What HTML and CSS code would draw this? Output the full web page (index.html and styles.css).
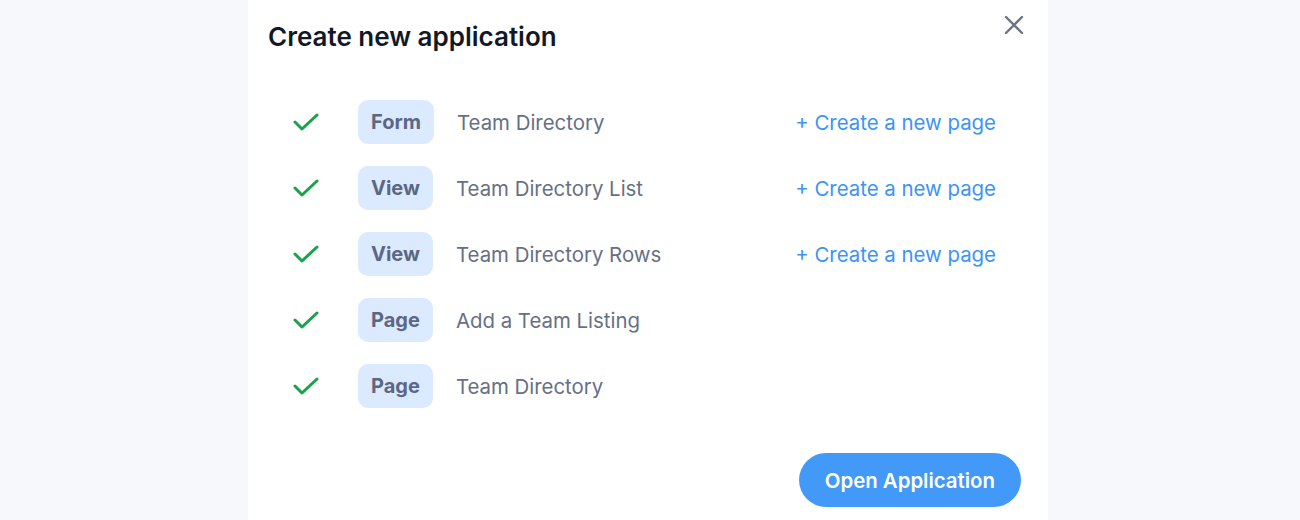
FILE: index.html
```html
<!DOCTYPE html>
<html lang="en">

<head>
    <meta charset="UTF-8">
    <meta name="viewport" content="width=device-width, initial-scale=1.0">
    <title>Create new application</title>
    <link rel="stylesheet" href="styles.css">
</head>

<body>
    <div class="modal">
        <!-- header -->
        <div class="modal_header">
            <h1>Create new application</h1>
            <button class="close_btn" aria-label="Close">
                <svg width="20" height="20" viewBox="0 0 20 20">
                    <path d="M2 2 L18 18 M18 2 L2 18" stroke="#6b7385" stroke-width="2.4" stroke-linecap="round" fill="none" />
                </svg>
            </button>
        </div>

        <!-- created items -->
        <div class="steps">
            <div class="step">
                <span class="check"><svg width="26" height="18" viewBox="0 0 26 18"><path d="M2 9 L9 16 L24 2" /></svg></span>
                <span class="badge">Form</span>
                <span class="name">Team Directory</span>
                <a class="new_page" href="#">+ Create a new page</a>
            </div>
            <div class="step">
                <span class="check"><svg width="26" height="18" viewBox="0 0 26 18"><path d="M2 9 L9 16 L24 2" /></svg></span>
                <span class="badge">View</span>
                <span class="name">Team Directory List</span>
                <a class="new_page" href="#">+ Create a new page</a>
            </div>
            <div class="step">
                <span class="check"><svg width="26" height="18" viewBox="0 0 26 18"><path d="M2 9 L9 16 L24 2" /></svg></span>
                <span class="badge">View</span>
                <span class="name">Team Directory Rows</span>
                <a class="new_page" href="#">+ Create a new page</a>
            </div>
            <div class="step">
                <span class="check"><svg width="26" height="18" viewBox="0 0 26 18"><path d="M2 9 L9 16 L24 2" /></svg></span>
                <span class="badge">Page</span>
                <span class="name">Add a Team Listing</span>
                <span></span>
            </div>
            <div class="step">
                <span class="check"><svg width="26" height="18" viewBox="0 0 26 18"><path d="M2 9 L9 16 L24 2" /></svg></span>
                <span class="badge">Page</span>
                <span class="name">Team Directory</span>
                <span></span>
            </div>
        </div>

        <div class="modal_footer">
            <button class="open_btn">Open Application</button>
        </div>
    </div>
</body>

</html>
```

FILE: styles.css
```css
body {
    margin: 0;
    padding: 0 4px 0 0;
    background-color: #f7f8fc;
    font-family: Inter, "Noto Sans", sans-serif;
    display: flex;
    justify-content: center;
}

.modal {
    background-color: #ffffff;
    width: 800px;
    height: 520px;
    box-sizing: border-box;
    padding: 12px 27px 0 20px;
}

.modal_header {
    display: flex;
    justify-content: space-between;
    align-items: flex-start;
}

h1 {
    margin: 9px 0 0 0;
    font-size: 26px;
    font-weight: 600;
    color: #111827;
}

.close_btn {
    background: none;
    border: 0;
    padding: 0;
    margin: 3px -3px 0 0;
    cursor: pointer;
}

.steps {
    margin-top: 48px;
    padding: 0 25px 0 25px;
    display: flex;
    flex-direction: column;
    gap: 22px;
}

.step {
    display: flex;
    align-items: center;
    height: 44px;
}

.check {
    width: 65px;
    display: flex;
}

.check path {
    fill: none;
    stroke: #16a34a;
    stroke-width: 3;
    stroke-linecap: round;
    stroke-linejoin: round;
}

.badge {
    background-color: #dbeafe;
    color: #5b6784;
    font-weight: 700;
    font-size: 20px;
    height: 44px;
    line-height: 44px;
    padding: 0 13px;
    border-radius: 10px;
    margin-right: 23px;
}

.name {
    flex: 1;
    font-size: 20.4px;
    color: #667085;
}

.new_page {
    font-size: 20.4px;
    color: #3b94f6;
    text-decoration: none;
}

.modal_footer {
    display: flex;
    justify-content: flex-end;
    margin-top: 45px;
}

.open_btn {
    background-color: #4299f7;
    color: #ffffff;
    border: 0;
    border-radius: 27px;
    height: 54px;
    padding: 0 26px;
    font-family: inherit;
    font-size: 20.4px;
    font-weight: 600;
    cursor: pointer;
}
```
